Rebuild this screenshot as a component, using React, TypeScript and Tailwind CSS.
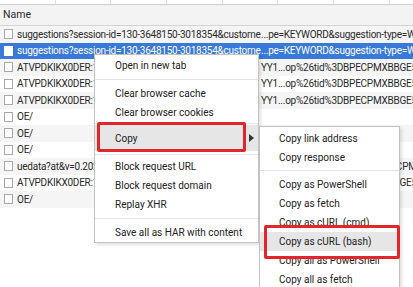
import React from "react";

type Row = { left: string; right?: string };

const rows: Row[] = [
  { left: "suggestions?session-id=130-3648150-3018354&custome", right: "...pe=KEYWORD&suggestion-type=WIDGET" },
  { left: "suggestions?session-id=130-3648150-3018354&custome", right: "...pe=KEYWORD&suggestion-type=WIDGET" },
  { left: "ATVPDKIKX0DER:1515358283827:XQWERTYUIOPLKJHG", right: "YY1...op%26tid%3DBPECPMXBBGE5V" },
  { left: "ATVPDKIKX0DER:1515358283827:XQWERTYUIOPLKJHG", right: "YY1...op%26tid%3DBPECPMXBBGE5V" },
  { left: "ATVPDKIKX0DER:1515358283827:XQWERTYUIOPLKJHG", right: "YY1...op%26tid%3DBPECPMXBBGE5V" },
  { left: "OE/" },
  { left: "OE/" },
  { left: "OE/" },
  { left: "uedata?at&v=0.202094.0&id=3DBPECPMXBBGE5V", right: "...op%26ue%3D1%26tid%3DBPECPMXBBGE5V" },
  { left: "ATVPDKIKX0DER:1515358283827:XQWERTYUIOPLKJHG", right: "YY1...op%26tid%3DBPECPMXBBGE5V" },
  { left: "OE/" },
];

const menu: (string | null)[] = [
  "Open in new tab",
  null,
  "Clear browser cache",
  "Clear browser cookies",
];

const menu2 = ["Block request URL", "Block request domain", "Replay XHR"];

const sub = [
  "Copy as PowerShell",
  "Copy as fetch",
  "Copy as cURL (cmd)",
  "Copy as cURL (bash)",
  "Copy all as PowerShell",
  "Copy all as fetch",
  "Copy all as cURL (cmd)",
  "Copy all as cURL (bash)",
];

function Sep({ h = "h-[9px]" }: { h?: string }) {
  return (
    <div className={`${h} flex items-center`}>
      <div className="h-px w-full bg-[#e3e3e3]" />
    </div>
  );
}

function Item({ label, active }: { label: string; active?: boolean }) {
  return (
    <div className={`flex h-[19px] items-center whitespace-nowrap pl-[20px] ${active ? "bg-[#e6e6e6]" : ""}`}>
      {label}
    </div>
  );
}

export default function App() {
  return (
    <div
      className="relative h-[287px] w-[413px] overflow-hidden bg-white text-[10px] text-[#2a2a2a]"
      style={{ fontFamily: "Roboto, 'Liberation Sans', sans-serif" }}
    >
      {/* overview strip */}
      <div className="flex h-[5px] border-b border-[#cfcfcf]">
        {Array.from({ length: 8 }).map((_, i) => (
          <div key={i} className="h-full w-[55.7px] shrink-0 border-r border-[#e2e2e2]" />
        ))}
      </div>

      {/* header */}
      <div className="flex h-[21px] items-center border-b border-[#d4d4d4] bg-[#f3f3f3] pl-[3px] text-[10.5px]">
        Name
      </div>

      {/* rows */}
      {rows.map((r, i) => {
        const selected = i === 1;
        const bg = selected ? "bg-[#3879d9] text-white" : i % 2 === 0 ? "bg-[#f5f5f5]" : "bg-white";
        return (
          <div key={i} className={`flex h-[16.5px] items-center whitespace-nowrap tracking-[-0.25px] ${bg}`}>
            <div
              className={`ml-[4px] mr-[4px] h-[10px] w-[9px] shrink-0 border ${
                selected ? "border-white bg-white" : "border-[#a9a9a9] bg-white"
              }`}
            />
            <span className="w-[244px] shrink-0 overflow-hidden">{r.left}</span>
            {r.right && <span className="shrink-0">{r.right}</span>}
          </div>
        );
      })}

      {/* context menu */}
      <div className="absolute left-[94px] top-[54px] w-[165px] border border-[#c3c3c3] bg-white pt-px text-[#222] shadow-[2px_2px_3px_rgba(0,0,0,0.12)]">
        {menu.map((m, i) => (m ? <Item key={i} label={m} /> : <Sep key={i} />))}
        <Sep h="h-[3px]" />
        <div className="relative flex h-[26px] items-center bg-[#e6e6e6] pl-[20px]">
          Copy
          <svg className="absolute right-[4px] top-[9px]" width="5" height="8" viewBox="0 0 5 8">
            <path d="M0 0 L5 4 L0 8 Z" fill="#333" />
          </svg>
        </div>
        <Sep h="h-[6px]" />
        {menu2.map((m) => (
          <Item key={m} label={m} />
        ))}
        <Sep />
        <Item label="Save all as HAR with content" />
      </div>

      {/* submenu */}
      <div className="absolute left-[259px] top-[126px] w-[141px] border border-[#c3c3c3] bg-white pt-[2px] text-[#222] shadow-[2px_2px_3px_rgba(0,0,0,0.12)]">
        <div className="flex h-[19px] items-center pl-[19px]">Copy link address</div>
        <div className="flex h-[19px] items-center pl-[19px]">Copy response</div>
        <Sep h="h-[7.5px]" />
        {sub.map((s) => (
          <div
            key={s}
            className={`flex h-[19px] items-center whitespace-nowrap pl-[19px] ${
              s === "Copy as cURL (bash)" ? "bg-[#e6e6e6]" : ""
            }`}
          >
            {s}
          </div>
        ))}
      </div>

      {/* annotation boxes */}
      <div className="absolute left-[97px] top-[122px] h-[30px] w-[149px] rounded-[2px] border-[3px] border-[#e3262a]" />
      <div className="absolute left-[264px] top-[225px] h-[34px] w-[136px] rounded-[2px] border-[3px] border-[#e3262a]" />
    </div>
  );
}
